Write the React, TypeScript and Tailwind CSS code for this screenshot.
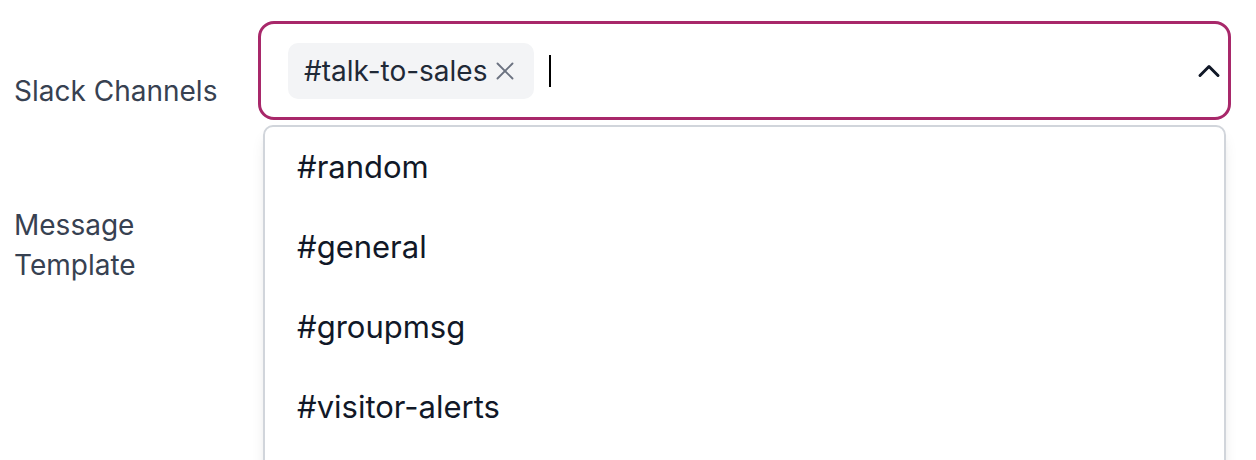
import { ChevronUp, X } from "lucide-react"

const channels = ["#random", "#general", "#groupmsg", "#visitor-alerts"]

export default function App() {
    return (
        <div className="w-[1256px] h-[460px] overflow-hidden bg-white font-['Inter',sans-serif] flex pl-[14px] pt-[21px]">
            <div className="w-[244px] shrink-0 text-[28px] text-[#374151]">
                <div className="pt-[50px] leading-[40px]">Slack Channels</div>
                <div className="mt-[94px] leading-[40px]">Message<br />Template</div>
            </div>
            <div className="w-[973px] flex flex-col">
                <div className="h-[99px] shrink-0 border-[3px] border-[#a8286a] rounded-[16px] flex items-center pl-[27px] pr-[1px]">
                    <div className="h-[56px] bg-[#f3f4f6] rounded-[10px] flex items-center pl-[16px] pr-[14px] gap-[3px] text-[28px] text-[#1f2937]">
                        <span>#talk-to-sales</span>
                        <X className="size-[30px] text-[#6b7280]" strokeWidth={1.5} />
                    </div>
                    <div className="w-[2px] h-[32px] bg-black ml-[15px]" />
                    <div className="grow" />
                    <ChevronUp className="size-[36px] text-[#111827]" strokeWidth={2} />
                </div>
                <div className="mx-[5px] mt-[5px] border-2 border-[#d1d5db] rounded-[10px] shadow-lg h-[400px] shrink-0">
                    {channels.map((c, i) => (
                        <div key={i} className="h-[80px] flex items-center pl-[32px] text-[31px] text-[#111827]">{c}</div>
                    ))}
                </div>
            </div>
        </div>
    )
}
